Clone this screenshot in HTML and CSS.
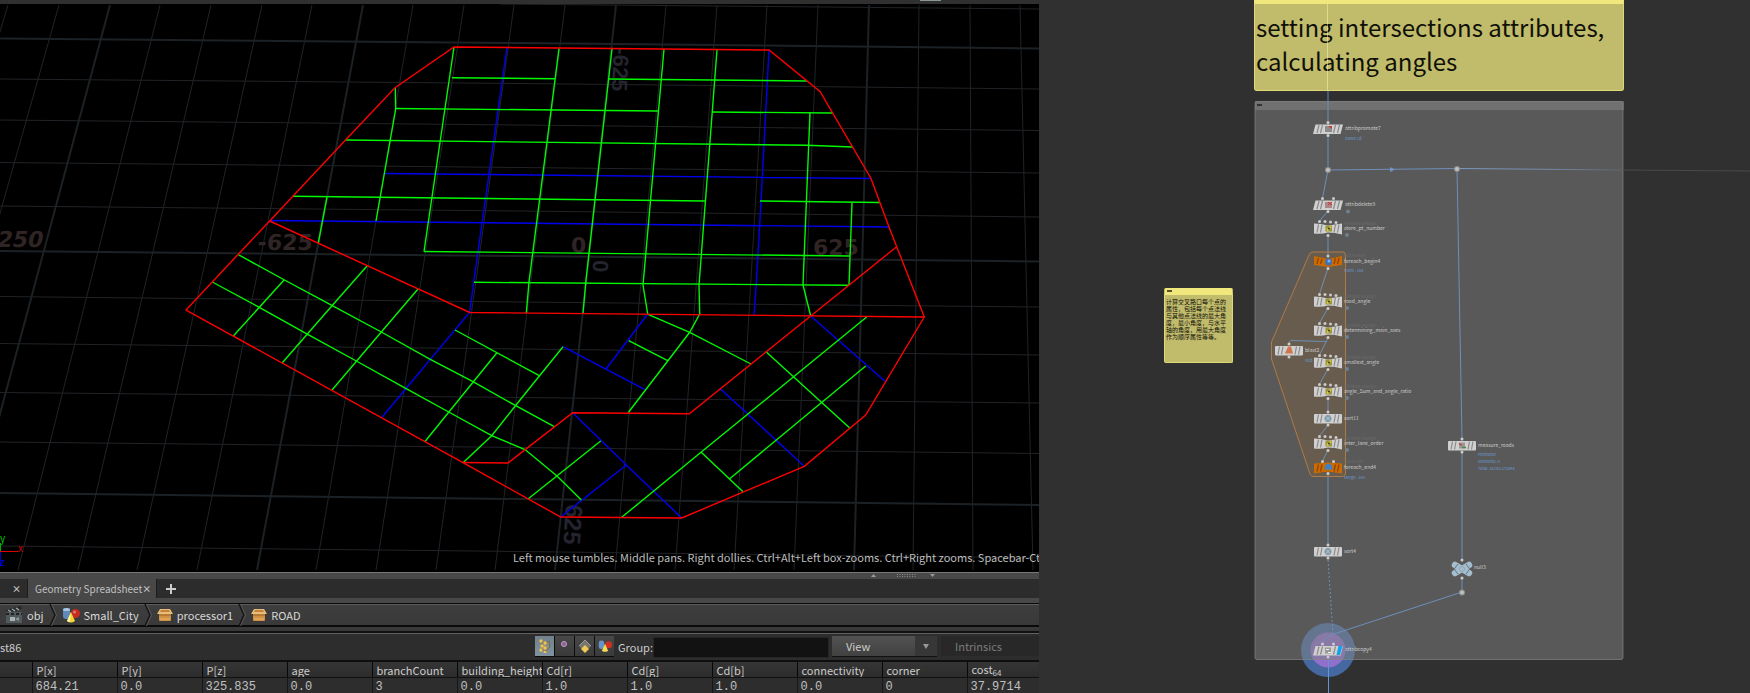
FILE: index.html
```html
<!DOCTYPE html>
<html lang="en">
<head>
<meta charset="utf-8">
<title>Small_City - ROAD</title>
<link rel="stylesheet" href="styles.css">
</head>
<body>
<main class="desktop">
<section class="left-pane">
  <div class="top-strip"><span class="strip-handle"></span></div>
  <div class="viewport">
    <svg class="scene" viewBox="0 4 1039 568" preserveAspectRatio="xMinYMin slice" role="img" aria-label="Road network in the scene view">
      <g class="grid">
        <path d="M500 4L1039 9M0 79L520 83.500L1039 89M0 120L520 125L1039 130.500M0 162.500L520 167.500L1039 173M0 206L520 211L1039 217M0 296.500L520 302L1039 307M0 343.500L520 349L1039 355M0 392.500L520 397.500L1039 403M0 442L520 447.500L1039 453.500M0 546L520 551.500L1039 558"/>
        <path d="M8 5L-161 570M59 5L-101 570M160 5L18 570M211 5L78 570M262 5L137 570M312 5L197 570M413 5L316 570M464 5L376 570M514 5L436 570M565 5L495 570M666 5L615 570M717 5L675 570M767 5L734 570M818 5L794 570M919 5L913 570M970 5L973 570M1020 5L1033 570"/>
      </g>
      <g class="grid grid-major">
        <path d="M0 38.500L520 43L1039 48.500M0 251L520 256L1039 261.500M0 493L520 499L1039 505M110 5L-42 570M363 5L257 570M616 5L555 570M869 5L854 570"/>
      </g>
      <g class="tick tick-x">
        <text transform="translate(-4 247) skewX(-12)">250</text>
        <text transform="translate(257 250) skewX(-5)">-625</text>
        <text x="571" y="253">0</text>
        <text x="813" y="255">625</text>
      </g>
      <g class="tick tick-z">
        <text transform="translate(614 47) rotate(93)">-625</text>
        <text transform="translate(593 260) rotate(91)">0</text>
        <text class="tick-near" transform="translate(566 504) rotate(94)">625</text>
      </g>
      <g class="road road-blue">
        <path d="M384 173.500L871 178.500M269.700 220.500L889 227M507 47L474 280L469.700 312.300L382 417.300M769 50L761 202L756 288L754 315M563 346.700L645 389.700M647.700 314L606 369M810.700 316L885 381.300M720.300 388.700L804.300 466.300M572.700 412.700L626.300 465L681.700 518M626.300 465L560.700 517"/>
      </g>
      <g class="road road-green">
        <path d="M452 77.700L555 78.700M608 79L807 81M395.300 108.500L658 111M712 112L833 113M345.500 140L807 145.300L852.500 147M292.700 196.300L705 201M760 201L880 202.500M424 251.500L850 256M474 282.300L849 285.300"/>
        <path d="M395.300 88L395.700 109L376 221M454 47L424 251.500M327 197L318.300 243M559 48.500L529 282L526.300 313M612 49L586 280L583 313.300M664 49L643 285L647.700 314M717 49.700L699 285L699.700 314M810 112.700L803 285L810.700 316M852 203L849 285"/>
        <path d="M238 254.500L284.500 280L332.300 305.700L381.300 332L430.300 359.300L473 381.700L515.700 405.700L554.300 426.700M212.300 282L259.300 307.300L307.700 334.300L356.300 361L405.700 388.300L448.700 412L491.700 435.700L525 449.500L557 476L581.300 500M455 330L539.300 375.700M284.300 279.700L233.300 336M367 266L332 305.700L282.300 362.700M418 289L381.300 332L332 390M496.700 353L425 441.500M563 346.700L520 400L491.700 435.700L463.300 462.500M628.700 340.700L667.700 360.700M699.700 314L689.700 332.300L628.300 412.500M648 314.300L689.700 332.300L751 364M866.700 317L793.300 377L701 452.300L621.700 517.300M865.700 366L729.700 478.700M766.300 352L849.700 428M701 452L743 491.700M600.700 441L528.300 498.700"/>
      </g>
      <g class="road road-red">
        <path d="M454 47L769 50L820 91.500L871 178.500L889 227L896.700 246.700L924.300 317L865.700 415L804.300 466.300L681.700 518L560.700 517L463 462.700L186 310L238 254.500L269.700 221L345.500 140L394.700 88Z"/>
        <path d="M269.700 221L469.700 312.500L924 317M896.700 246.700L810.700 316L689.300 413.700L572.700 412.700L508 463L463 462.500"/>
      </g>
      <g class="axis">
        <path class="axis-y" d="M.5 543V551"/><path class="axis-x" d="M0 551.500H18"/><path class="axis-z" d="M.5 552V566"/>
        <text class="axis-ty" x="0" y="542">y</text><text class="axis-tx" x="18" y="552">x</text><text class="axis-tz" x="0" y="566">z</text>
      </g>
    </svg>
    <p class="hint">Left mouse tumbles. Middle pans. Right dollies. Ctrl+Alt+Left box-zooms. Ctrl+Right zooms. Spacebar-Ctrl-L</p>
  </div>

  <div class="splitter">
    <svg width="64" height="5" viewBox="0 0 64 5" aria-hidden="true"><path d="M0 4L2.500 1L5 4Z" fill="#999"/><path d="M26 1.500H46M26 3.500H46" stroke="#8a8a8a" stroke-dasharray="1 1.500"/><path d="M59 1H64L61.500 4Z" fill="#999"/></svg>
  </div>

  <nav class="tabs" aria-label="Pane tabs">
    <div class="tab"><button class="tab-close" aria-label="Close tab">×</button></div>
    <div class="tab tab-active"><button class="tab-name">Geometry Spreadsheet</button><button class="tab-close" aria-label="Close Geometry Spreadsheet">×</button></div>
    <button class="tab-add" aria-label="Add tab"><svg width="10" height="10" viewBox="0 0 10 10"><path d="M5 0V10M0 5H10" stroke="#ccc" stroke-width="2"/></svg></button>
  </nav>

  <nav class="path" aria-label="Network path">
    <a class="crumb" href="#obj"><svg width="18" height="18" viewBox="0 0 18 18"><path d="M1 4L16 0L17 3L2 7Z" fill="#252a2c"/><path d="M3 4L6 6M7 3L10 5M11 2L14 4" stroke="#a3a8a8" stroke-width="1.500"/><rect x="1" y="6" width="16" height="11" fill="#505a5c"/><path d="M1 8H17" stroke="#222" stroke-width="2" stroke-dasharray="3 2"/><rect x="5" y="11" width="5" height="4" fill="#a9b2b3"/><path d="M10 13L14 11V15Z" fill="#8d9798"/></svg>obj</a>
    <svg class="chevron" width="8" height="22" viewBox="0 0 8 22"><path d="M1 0L6 11L1 22" fill="none" stroke="#151515" stroke-width="1.500"/><path d="M2.500 0L7.500 11L2.500 22" fill="none" stroke="#5a5a5a"/></svg>
    <a class="crumb" href="#city"><svg width="18" height="16" viewBox="0 0 18 16"><rect x="1" y="1" width="7" height="11" rx="3" fill="#5d8ab8"/><ellipse cx="4.500" cy="2.500" rx="3.500" ry="1.500" fill="#a9c8e6"/><circle cx="13.500" cy="6.500" r="4.500" fill="#c52c1f"/><circle cx="12.500" cy="5" r="1.500" fill="#e9786c"/><path d="M9 5L13 14Q9 17 5 14Z" fill="#f2d535"/><path d="M9 5L8 15Q6 15 5 14Z" fill="#fff2a0"/></svg>Small_City</a>
    <svg class="chevron" width="8" height="22" viewBox="0 0 8 22"><path d="M1 0L6 11L1 22" fill="none" stroke="#151515" stroke-width="1.500"/><path d="M2.500 0L7.500 11L2.500 22" fill="none" stroke="#5a5a5a"/></svg>
    <a class="crumb" href="#processor1"><svg width="16" height="14" viewBox="0 0 16 14"><path d="M2 4H14V12Q14 13 13 13H3Q2 13 2 12Z" fill="#d19145"/><path d="M3 1H13L16 6H0Z" fill="#e8bd7c"/><path d="M4 2H12L13 4H3Z" fill="#c28338"/><path d="M2 7H14" stroke="#9b6424"/><path d="M3 11H13" stroke="#e9b467"/></svg>processor1</a>
    <svg class="chevron" width="8" height="22" viewBox="0 0 8 22"><path d="M1 0L6 11L1 22" fill="none" stroke="#151515" stroke-width="1.500"/><path d="M2.500 0L7.500 11L2.500 22" fill="none" stroke="#5a5a5a"/></svg>
    <a class="crumb" href="#road"><svg width="16" height="14" viewBox="0 0 16 14"><path d="M2 4H14V12Q14 13 13 13H3Q2 13 2 12Z" fill="#d19145"/><path d="M3 1H13L16 6H0Z" fill="#e8bd7c"/><path d="M4 2H12L13 4H3Z" fill="#c28338"/><path d="M2 7H14" stroke="#9b6424"/><path d="M3 11H13" stroke="#e9b467"/></svg>ROAD</a>
  </nav>

  <div class="gap-strip"></div>

  <div class="toolbar">
    <span class="node-name">st86</span>
    <div class="modes">
      <button class="mode mode-on" aria-label="Points"><svg width="14" height="14" viewBox="0 0 14 14"><path d="M3 2L7 4L11 2L12 8L8 12L3 10L5 6Z" fill="#8c8c80" stroke="#6f6a58"/><g fill="#f0c34e"><circle cx="3" cy="2" r="1.700"/><circle cx="7" cy="4" r="1.700"/><circle cx="4" cy="7" r="1.700"/><circle cx="3" cy="11" r="1.700"/><circle cx="7" cy="9" r="1.700"/><circle cx="7" cy="13" r="1.500"/></g></svg></button>
      <button class="mode" aria-label="Vertices"><svg width="14" height="14" viewBox="0 0 14 14"><circle cx="6" cy="5" r="2.500" fill="#8c5f94" stroke="#caa0ce"/></svg></button>
      <button class="mode" aria-label="Primitives"><svg width="14" height="14" viewBox="0 0 14 14"><path d="M7 1L13 7L7 13L1 7Z" fill="#77776f"/><path d="M7 6L11 10L7 14L3 10Z" fill="#f3c853"/><path d="M1 7L7 1L13 7" fill="none" stroke="#9a9a90"/></svg></button>
      <button class="mode" aria-label="Detail"><svg width="14" height="14" viewBox="0 0 18 16"><rect x="1" y="1" width="7" height="11" rx="3" fill="#6794c4"/><circle cx="13.500" cy="6.500" r="4.500" fill="#d0301f"/><path d="M9 5L13 14Q9 17 5 14Z" fill="#f5da55"/></svg></button>
    </div>
    <label class="group-label" for="group">Group:</label>
    <input class="group-input" id="group" type="text">
    <div class="view"><select class="view-select" aria-label="View"><option>View</option></select><span class="view-arrow"><svg width="6" height="5" viewBox="0 0 6 5"><path d="M0 0H6L3 5Z" fill="#999"/></svg></span></div>
    <button class="intrinsics">Intrinsics</button>
  </div>

  <div class="sheet-scroll">
  <table class="sheet">
    <thead><tr><th class="row-head"></th><th>P[x]</th><th>P[y]</th><th>P[z]</th><th>age</th><th>branchCount</th><th>building_height</th><th>Cd[r]</th><th>Cd[g]</th><th>Cd[b]</th><th>connectivity</th><th>corner</th><th class="last">cost<small>64</small></th></tr></thead>
    <tbody><tr><td class="row-head"></td><td>684.21</td><td>0.0</td><td>325.835</td><td>0.0</td><td>3</td><td>0.0</td><td>1.0</td><td>1.0</td><td>1.0</td><td>0.0</td><td>0</td><td>37.9714</td></tr></tbody>
  </table>
  </div>
</section>

<section class="network">
  <svg class="graph" viewBox="1039 0 711 693" preserveAspectRatio="xMinYMin slice" role="img" aria-label="Node network">
    <defs>
      <linearGradient id="fade" gradientUnits="userSpaceOnUse" x1="1457" y1="0" x2="1650" y2="0"><stop offset="0" stop-color="#7c9cc4"/><stop offset=".5" stop-color="#7389a6"/><stop offset="1" stop-color="#555"/></linearGradient>
      <g id="body"><rect x="-14" y="-4.500" width="28" height="9.500" rx="1" fill="#d0d0d0"/><path d="M-11 4L-9.500 -4M-7.500 4L-6 -4M6 4L7.500 -4M9.500 4L11 -4" stroke="#8a8a8a" stroke-width="1.200"/></g>
      <g id="slant"><path d="M-12.500 -4.500H15L12.500 5H-15Z" fill="#d0d0d0"/><path d="M-11 4L-9 -4M-7.500 4L-5.500 -4M5.500 4L7.500 -4M9.500 4L11.500 -4" stroke="#8a8a8a" stroke-width="1.200"/></g>
      <g id="wave"><path d="M-14 -5Q-7 -5 0 -3Q7 -4 14 -5V6Q7 4 0 4Q-7 6 -14 5Z" fill="#d0d0d0"/><path d="M-11 4L-9.500 -4M-7.500 4L-6 -4M6 4L7.500 -4M9.500 4L11 -4" stroke="#8a8a8a" stroke-width="1.200"/><path d="M-2.500 -3H4V3H-2.500Z" fill="#99953b"/><path d="M-1 2L3 -2" stroke="#d8ca3c" stroke-width="2"/><circle cx="1" cy="0" r="1" fill="#333"/></g>
      <g id="wrangle"><use href="#wave"/><g fill="#ccc"><circle cx="-8.500" cy="-7" r="1.500"/><circle cx="-3" cy="-7" r="1.500"/><circle cx="2.500" cy="-6.500" r="1.500"/><circle cx="8" cy="-6" r="1.500"/><circle cx="0" cy="7" r="1.500"/></g><circle cx="19" cy="6.500" r="2" fill="#71808a"/><text class="kind" x="16" y="-4">Attribute Wrangle</text></g>
      <g id="ports" fill="#ccc"><circle cx="0" cy="-6.500" r="1.500"/><circle cx="0" cy="6.500" r="1.500"/></g>
      <g id="ports2" fill="#ccc"><circle cx="-5.500" cy="-6.500" r="1.500"/><circle cx="5.500" cy="-6.500" r="1.500"/><circle cx="0" cy="6.500" r="1.500"/></g>
      <g id="sorticon"><circle r="3.500" fill="#7f97a6"/><path d="M-2 -2L2 2M2 -2L-2 2" stroke="#b9ccd8"/></g>
      <g id="dot"><circle r="3" fill="#8f8f8f"/><circle r="2" fill="#bfbfbb"/></g>
    </defs>
    <circle cx="1328" cy="650" r="27" fill="#4668a0"/><circle cx="1328" cy="650" r="17.500" fill="#9070cc"/>
    <path d="M1328 0V101" stroke="#5b86ba"/>
    <rect class="box" x="1255" y="101.500" width="368" height="558" rx="2"/>
    <rect class="box-head" x="1255" y="101" width="369" height="9"/><path d="M1257 105H1262" stroke="#333" stroke-width="2"/>
    <path class="loop" d="M1313 252H1343Q1345.500 252 1345.500 255V473Q1345.500 476.500 1342 476.500H1313Q1311 476.500 1310 474L1271.500 359V342L1309 255Q1310 252 1313 252Z"/>
    <g class="wires">
      <path d="M1328 101V170L1322.500 198M1328 211L1319.500 221M1328 235V256M1328 268L1319.500 294M1328 308L1319.500 323M1328 338L1326 342L1319.500 355M1326 341.500L1291 340.500Q1289 341 1289 345M1328 369L1319.500 384M1328 398V412M1328 425L1319.500 436M1328 450L1322.500 461M1328 474V546M1328 170L1457 168.500L1462 439M1462 452V560M1462 577V592L1334 634Q1323 638 1322.500 644"/>
      <path d="M1328 560L1333 634" stroke-dasharray="2 2"/>
      <path d="M1457 168.500L1623 170" stroke="url(#fade)"/><path d="M1623 170L1750 171" stroke="#4a4a4a"/>
      <path d="M1328.500 660V693" stroke="#5d97d8"/>
      <path class="flow" d="M1390 167L1395 169.500L1390 172Z"/>
    </g>
    <use href="#dot" x="1328" y="170"/><use href="#dot" x="1457" y="169"/><use href="#dot" x="1462" y="592.500"/>
    <g transform="translate(1328 129)"><use href="#slant"/><use href="#ports"/><rect x="-3" y="-3" width="7" height="6" fill="#8b8b8b"/><path d="M0 -3H4V0Z" fill="#c33c2d"/></g>
    <g transform="translate(1328 205)"><use href="#slant"/><use href="#ports2"/><rect x="-3" y="-3" width="7" height="6" fill="#a88"/><path d="M0 -3L4 0M4 -3L0 0" stroke="#c33"/><circle cx="20" cy="6.500" r="2" fill="#71808a"/></g>
    <use href="#wrangle" x="1328" y="228.500"/><use href="#wrangle" x="1328" y="301.500"/><use href="#wrangle" x="1328" y="330.500"/><use href="#wrangle" x="1328" y="362.500"/><use href="#wrangle" x="1328" y="391.500"/><use href="#wrangle" x="1328" y="443.500"/>
    <g transform="translate(1328 261)"><path d="M-14 -5L0 -2L14 -5V4L0 6L-14 4Z" fill="#cc6900"/><path d="M-11 3L-9.500 -3M-7.500 3L-6 -2M6 3L7.500 -3M9.500 3L11 -3" stroke="#8a4500" stroke-width="1.200"/><circle cx=".5" cy="1" r="3.500" fill="#3c72b8"/><circle cx="1" cy="0" r="1.500" fill="#79b2ee"/><g fill="#ccc"><circle cy="-5" r="1.500"/><circle cy="7.500" r="1.500"/></g></g>
    <g transform="translate(1328 467.500)"><path d="M-14 -4L0 -5L14 -4V6L0 4L-14 6Z" fill="#cc6900"/><path d="M-11 4L-9.500 -3M-7.500 4L-6 -3M6 4L7.500 -3M9.500 4L11 -3" stroke="#8a4500" stroke-width="1.200"/><path d="M-3.500 2Q-3 -4 .5 -4Q4 -4 4.500 2Z" fill="#3c82c8"/><g fill="#ccc"><circle cx="-5.500" cy="-6" r="1.500"/><circle cx="5.500" cy="-6" r="1.500"/><circle cy="6" r="1.500"/></g></g>
    <g transform="translate(1289 350.500)"><use href="#body"/><use href="#ports"/><path d="M-4 3L-1 -4H2L4 3Z" fill="#d0744c"/></g>
    <g transform="translate(1328 418.500)"><use href="#body"/><use href="#ports"/><use href="#sorticon"/></g>
    <g transform="translate(1328 551.500)"><use href="#body"/><use href="#ports"/><use href="#sorticon"/></g>
    <g transform="translate(1462 445.500)"><use href="#body"/><use href="#ports"/><path d="M-3 -3H3V3H-3Z" fill="#999"/><path d="M-3 -2L0 0" stroke="#b44" stroke-width="1.500"/><path d="M0 2H4" stroke="#584" stroke-width="1.500"/></g>
    <g transform="translate(1462 569)"><path d="M-7 -4L7 4M7 -4L-7 4" stroke="#a5bdcc" stroke-width="6.500" stroke-linecap="round"/><path d="M-4 -5L-7 -1M4 -5L7 -1M-4 5L-7 1M4 5L7 1" stroke="#5e7482"/><circle r="2.500" fill="none" stroke="#8fa6b5"/><circle cy="-9" r="1.500" fill="#ccc"/><circle cy="9" r="1.500" fill="#ccc"/></g>
    <g transform="translate(1328 650.500)"><use href="#slant"/><path d="M10.500 -4.500H14.500L12 4.500H8.500Z" fill="#0aa5ee"/><rect x="-3" y="-3" width="6" height="6" fill="#999"/><path d="M-2 -1H1M0 2H3" stroke="#eee"/><use href="#ports2"/></g>
    <g class="names">
      <text x="1345" y="130">attribpromote7</text><text x="1345" y="206">attribdelete9</text><text x="1344" y="230">store_pt_number</text><text x="1344" y="263">foreach_begin4</text><text x="1344" y="303">road_angle</text><text x="1344" y="332">determining_main_axes</text><text x="1305" y="352">blast2</text><text x="1344" y="364">smallest_angle</text><text x="1344" y="393">angle_Sum_and_angle_ratio</text><text x="1344" y="420">sort11</text><text x="1344" y="445">inter_lane_order</text><text x="1344" y="469">foreach_end4</text><text x="1344" y="553">sort4</text><text x="1478" y="447">measure_roads</text><text x="1474" y="569">null3</text><text x="1345" y="651">attribcopy4</text>
    </g>
    <g class="info">
      <text x="1345" y="140">name Cd</text><text x="1344" y="272">Point : 164</text><text x="1305" y="362">ned:</text><text x="1344" y="479">Merge : 165</text><text x="1478" y="456">Perimeter</text><text x="1478" y="463">Elements: 0</text><text x="1478" y="470">Total: 38183.373094</text>
    </g>
    <text class="kind" x="1344" y="257">Block Begin</text><text class="kind" x="1344" y="463">Block End</text>
  </svg>
  <article class="note note-title"><p>setting intersections attributes,<br>calculating angles</p></article>
  <article class="note note-small" lang="zh"><p>计算交叉路口每个点的<br>属性，包括每个点法线<br>与其他点法线的最大角<br>度，最小角度，与水平<br>轴的角度，用最大角度<br>作为顺序属性等等。</p></article>
</section>
</main>
</body>
</html>
```

FILE: styles.css
```css
* { box-sizing: border-box; }
body { margin: 0; background: #303030; font-family: "Noto Sans CJK SC", "Noto Sans", sans-serif; font-size: 11px; color: #ccc; }
button, input, select { font: inherit; color: inherit; border: 0; padding: 0; margin: 0; background: none; border-radius: 0; }
p { margin: 0; }
a { color: inherit; text-decoration: none; }

.desktop { display: flex; height: 100vh; overflow: hidden; }
.left-pane { flex: 1039 1 0; min-width: 0; display: flex; flex-direction: column; background: #2d2d2d; }
.network { flex: 711 1 0; min-width: 0; position: relative; overflow: hidden; background: #303030; }

.top-strip { height: 4px; background: #303030; display: flex; justify-content: flex-end; padding-right: 98px; }
.strip-handle { width: 21px; height: 1px; background: #8b9696; }
.viewport { flex: 1; min-height: 0; position: relative; overflow: hidden; background: #000; }
.scene, .graph { display: block; width: 100%; height: 100%; }
.grid path { fill: none; stroke: #202327; stroke-width: 1; }
.grid-major path { stroke: #1c2125; stroke-width: 2; }
.road path { fill: none; stroke-width: 1.4; }
.road-red path { stroke: #ff0000; }
.road-green path { stroke: #00f800; }
.road-blue path { stroke: #0000f0; }
.tick { font-family: "DejaVu Sans", sans-serif; font-weight: bold; font-size: 22px; }
.tick-x { fill: #302424; }
.tick-z { fill: #24242f; font-family: "Liberation Sans", sans-serif; }
.tick-near { font-size: 24px; }
.axis { font-size: 10px; fill: none; }
.axis-x { stroke: #e00000; } .axis-y { stroke: #00b000; } .axis-z { stroke: #0000c0; }
.axis-tx { fill: #d00000; } .axis-ty { fill: #00c000; } .axis-tz { fill: #0000e0; }
.hint { position: absolute; left: 513px; right: 0; bottom: 6px; line-height: 18px; white-space: nowrap; overflow: hidden; color: #bdbdbd; }

.splitter { height: 7px; background: #484848; border-top: 1px solid #777; display: flex; justify-content: flex-end; padding-right: 104px; }
.tabs { height: 19px; display: flex; background: #2c2c2c; }
.tab { display: flex; align-items: center; width: 28px; justify-content: flex-end; padding-right: 6px; border-right: 1px solid #1d1d1d; color: #c0c0c0; }
.tab-active { width: 129px; justify-content: space-between; padding-left: 7px; background: #484848; }
.tab-name { line-height: 18px; white-space: nowrap; font-size: 10px; }
.tab-close { font-size: 9px; line-height: 18px; font-weight: bold; }
.tab-add { margin-left: 8px; width: 12px; display: grid; place-items: center; }

.path { height: 29px; display: flex; align-items: center; border-top: 5px solid #484848; background: linear-gradient(#3e3e3e, #393939); box-shadow: inset 0 1px #0a0a0a, inset 0 2px #5c5c5c, inset 0 -2px #0a0a0a; color: #d8d8d8; padding-left: 5px; }
.crumb { display: flex; align-items: center; gap: 4px; line-height: 22px; }
.chevron { margin: 0 5px; }
.gap-strip { height: 7px; background: #393939; border-bottom: 1px solid #606060; box-shadow: inset 0 -2px #111; }

.toolbar { height: 28px; display: flex; align-items: flex-start; padding-top: 2px; background: #2d2d2d; border-bottom: 2px solid #0e0e0e; }
.node-name { flex: 1 1 0; line-height: 22px; }
.modes { display: flex; gap: 1px; background: #0c0c0c; height: 21px; }
.mode { width: 19px; height: 20px; display: grid; place-items: center; background: linear-gradient(#484848, #3a3a3a); }
.mode-on { background: linear-gradient(#71828c, #7f939e); }
.group-label { margin-left: 4px; width: 35px; line-height: 22px; white-space: nowrap; }
.group-input { width: 176px; height: 21px; margin-top: 1px; background: #121212; border: 1px solid #252525; }
.view { display: flex; width: 105px; height: 20px; margin-left: 3px; background: linear-gradient(#525252, #414141); box-shadow: 0 1px #111; position: relative; }
.view-select { appearance: none; width: 100%; height: 20px; padding-left: 14px; }
.view-arrow { position: absolute; right: 0; top: 0; width: 22px; height: 20px; display: grid; place-items: center; background: #373737; pointer-events: none; }
.intrinsics { width: 98px; height: 20px; margin-left: 4px; padding-left: 14px; text-align: left; background: #282828; color: #7c7c7c; line-height: 18px; }

.sheet-scroll { height: 31px; overflow: hidden; }
.sheet { width: 100%; table-layout: fixed; border-collapse: collapse; line-height: 14px; }
.sheet th { width: 85px; height: 15px; padding: 0 0 0 4px; border-left: 1px solid #080808; border-bottom: 1px solid #111; font-weight: normal; text-align: left; white-space: nowrap; overflow: hidden; background: linear-gradient(#353535, #2c2c2c); color: #ccc; }
.sheet td { height: 18px; padding: 0 0 0 3px; border-left: 1px solid #171717; font-family: "Liberation Mono", monospace; font-size: 12px; line-height: 18px; color: #c0c0c0; }
.sheet .row-head { width: 32px; border-left: 0; }
.sheet .last { width: auto; }
.sheet small { font-size: 8px; vertical-align: -2px; line-height: 8px; }

.box { fill: #828282; fill-opacity: .51; stroke: #858585; stroke-opacity: .7; }
.box-head { fill: #828282; fill-opacity: .6; }
.loop { fill: #996b28; fill-opacity: .22; stroke: #b07a42; stroke-width: 1; }
.wires { fill: none; stroke: #6f8fb9; stroke-width: 1; }
.flow { fill: #7094c4; stroke: none; }
.names { font-size: 5px; fill: #ccc; }
.info { font-size: 4px; fill: #6f9bd2; }
.kind { font-size: 4px; fill: #6c6c6c; }

.note { position: absolute; background: rgba(196, 190, 109, .98); border: 1px solid #e0d877; border-top-color: #f7ee83; color: #101008; border-radius: 2px; }
.note-title { left: 215px; top: 0; width: 370px; height: 91px; border-top: 4px solid #f0e87c; border-radius: 0 0 3px 3px; font-size: 24px; line-height: 34px; padding: 6px 0 0 1px; white-space: nowrap; }
.note-title::before { content: ""; position: absolute; left: 72px; top: 0; bottom: 0; width: 1px; background: rgba(255, 255, 190, .45); }
.note-small { left: 125px; top: 288px; width: 69px; height: 75px; border-top: 7px solid #f0e87c; font-size: 6px; line-height: 7px; padding: 3px 0 0 1px; white-space: nowrap; }
.note-small::before { content: ""; position: absolute; left: 2px; top: -5px; width: 5px; height: 2px; background: #55522a; }
```
